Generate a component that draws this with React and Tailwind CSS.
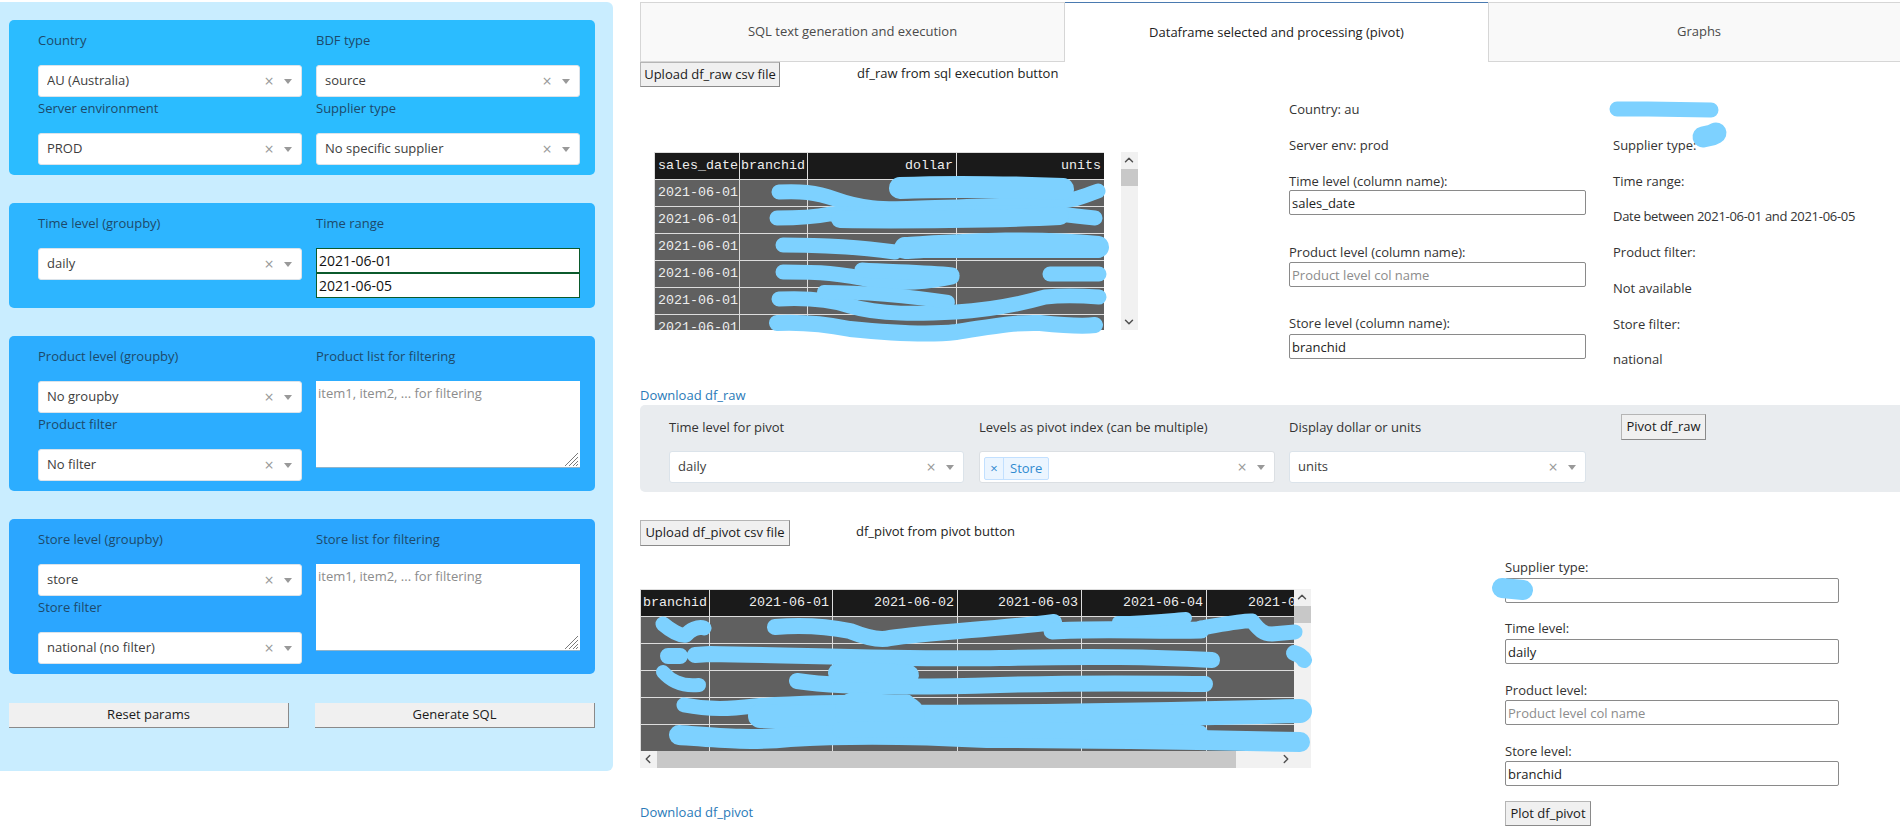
import { useState } from 'react'
import { ChevronUp, ChevronDown, ChevronLeft, ChevronRight } from 'lucide-react'

const rawRows = [0, 1, 2, 3, 4, 5]
const pivotRows = [0, 1, 2, 3, 4]
const pivotDates = ['2021-06-01', '2021-06-02', '2021-06-03', '2021-06-04', '2021-06-05']

function Select({ value, className = '', textClassName = 'text-[#3d3d3d]' }) {
  return (
    <div className={`flex h-[32px] items-center rounded-[3px] border border-[#dbe3ea] bg-white pl-[8px] ${className}`}>
      <span className={`flex-1 truncate ${textClassName}`}>{value}</span>
      <span className="w-[16px] text-center text-[16px] leading-none text-[#999]">×</span>
      <span className="ml-[7px] mr-[9px] h-0 w-0 border-x-[4px] border-t-[5px] border-x-transparent border-t-[#999]" />
    </div>
  )
}

function Field({ label, value }) {
  return (
    <div className="pt-[1px]">
      <div className="mb-[15px] h-[20px] leading-[20px] text-[#1d4a6b]">{label}</div>
      <Select value={value} />
    </div>
  )
}

function ListField({ label }) {
  return (
    <div className="pt-[1px]">
      <div className="mb-[15px] h-[20px] leading-[20px] text-[#1d4a6b]">{label}</div>
      <div className="relative h-[87px] w-[264px]">
        <textarea
          className="block h-[87px] w-[264px] resize-none border-b border-[#8fb4cc] bg-white px-[2px] py-[2px] leading-[20px] placeholder:text-[#8c8c8c]"
          placeholder="item1, item2, ... for filtering"
        />
        <svg className="absolute bottom-[1px] right-[1px]" width="15" height="15" viewBox="0 0 15 15" stroke="#7a7a7a" strokeWidth="1">
          <path d="M1 14L14 1M5 14L14 5M9 14L14 9M12 14L14 12" />
        </svg>
      </div>
    </div>
  )
}

function Box({ className, children }) {
  return <div className={`grid grid-cols-[264px_264px] gap-x-[14px] rounded-[5px] pb-[10px] pl-[29px] pt-[9px] ${className}`}>{children}</div>
}

function SideButton({ children }) {
  return (
    <button className="h-[25px] w-[280px] border-b border-r border-[#8a8a8a] bg-[#f0f0f0] text-[#1a1a1a]">
      {children}
    </button>
  )
}

function PlainButton({ className, children }) {
  return (
    <button className={`shrink-0 border border-[#b5b5b5] border-b-[#8a8a8a] border-r-[#8a8a8a] bg-[#f0f0f0] text-[#1a1a1a] ${className}`}>
      {children}
    </button>
  )
}

function TextInput({ value, placeholder, className = 'w-[297px]' }) {
  return (
    <input
      readOnly
      value={value}
      placeholder={placeholder}
      className={`block h-[25px] rounded-[2px] border border-[#8a8a8a] bg-white px-[2px] text-[#222] placeholder:text-[#8c8c8c] ${className}`}
    />
  )
}

// blue marker strokes drawn over the tables
function Scribble({ viewBox, width, height, strokes }) {
  return (
    <svg
      className="pointer-events-none absolute left-0 top-0 overflow-visible"
      width={width}
      height={height}
      viewBox={viewBox}
      fill="none"
      stroke="#7dd1ff"
      strokeLinecap="round"
      strokeLinejoin="round"
    >
      {strokes.map((s) => (
        <path key={s.d} d={s.d} strokeWidth={s.w} />
      ))}
    </svg>
  )
}

const rawStrokes = [
  { d: 'M779 192C800 191 815 192 835 199C860 208 880 210 920 208C980 206 1040 206 1075 199C1085 196 1092 193 1098 191', w: 15 },
  { d: 'M900 188C950 186 1010 187 1063 189', w: 22 },
  { d: 'M777 218C800 218 815 217 830 214C900 214 1000 212 1060 214C1075 216 1085 217 1095 218', w: 15 },
  { d: 'M840 219C900 220 1000 219 1060 216', w: 18 },
  { d: 'M783 245C820 245 860 247 895 252', w: 15 },
  { d: 'M905 248C960 245 1030 240 1098 247', w: 22 },
  { d: 'M905 251L1098 251', w: 14 },
  { d: 'M783 272C820 272 840 273 875 281C900 284 930 282 952 277', w: 15 },
  { d: 'M862 270C890 272 925 272 952 275', w: 15 },
  { d: 'M1050 274L1099 274', w: 15 },
  { d: 'M779 299C800 298 825 298 850 306C880 315 920 314 956 312C990 310 1020 304 1045 297C1065 295 1085 296 1099 297', w: 15 },
  { d: 'M824 292C860 292 910 296 948 302', w: 14 },
  { d: 'M777 323C800 322 825 324 850 329C890 333 930 335 956 332C985 328 1010 322 1040 323C1060 325 1080 327 1095 325', w: 16 },
]

const pivotStrokes = [
  { d: 'M663 624C670 630 680 636 686 635C690 630 698 626 704 628', w: 15 },
  { d: 'M775 627C800 625 825 626 850 631C865 637 880 641 890 638C930 632 1000 629 1054 622', w: 16 },
  { d: 'M1052 631C1100 628 1150 631 1201 630', w: 17 },
  { d: 'M1118 622C1150 622 1180 618 1186 618', w: 12 },
  { d: 'M1201 628C1225 624 1245 620 1252 621C1258 628 1262 634 1272 634L1295 632', w: 15 },
  { d: 'M668 656L680 656M695 655L710 654C800 655 900 660 1000 658C1100 656 1150 657 1212 660', w: 16 },
  { d: 'M1294 653C1298 654 1302 656 1304 660', w: 16 },
  { d: 'M663 672C670 680 680 687 699 685', w: 14 },
  { d: 'M797 681C830 686 900 688 1000 685C1100 682 1170 684 1205 684', w: 16 },
  { d: 'M838 673C860 672 890 673 909 675', w: 20 },
  { d: 'M684 705C710 710 730 709 755 706C790 703 830 702 907 702', w: 15 },
  { d: 'M760 716C900 718 1100 716 1300 711', w: 24 },
  { d: 'M855 712L905 716', w: 40 },
  { d: 'M679 735C720 738 750 741 790 737C870 732 950 736 987 738C1100 738 1200 740 1300 742', w: 20 },
  { d: 'M840 730C900 728 1000 729 1200 733', w: 16 },
]

export default function App() {
  const [tab] = useState('pivot')

  const tabClass = (name) =>
    name === tab
      ? 'flex items-center justify-center border-t border-t-[#4a7ab0] bg-white text-[#222]'
      : 'flex items-center justify-center border border-[#d6d6d6] bg-[#f9f9f9] text-[#4a4a4a]'

  return (
    <div className="flex h-[839px] overflow-hidden bg-white font-['Open_Sans',sans-serif] text-[13px] text-[#333]">
      {/* left params panel */}
      <div className="mt-[2px] h-[769px] w-[613px] shrink-0 rounded-r-[6px] bg-[#c9edff] pl-[9px] pt-[18px]">
        <div className="flex w-[586px] flex-col gap-[28px]">
          <Box className="bg-[#2bbcff]">
            <Field label="Country" value="AU (Australia)" />
            <Field label="BDF type" value="source" />
            <Field label="Server environment" value="PROD" />
            <Field label="Supplier type" value="No specific supplier" />
          </Box>

          <Box className="bg-[#2db5ff]">
            <Field label="Time level (groupby)" value="daily" />
            <div className="pt-[1px]">
              <div className="mb-[15px] h-[20px] leading-[20px] text-[#1d4a6b]">Time range</div>
              <input readOnly value="2021-06-01" className="block h-[25px] w-[264px] border border-[#0b5a2c] bg-white px-[2px] text-[14px] text-[#111]" />
              <input readOnly value="2021-06-05" className="block h-[25px] w-[264px] border border-[#0b5a2c] bg-white px-[2px] text-[14px] text-[#111]" />
            </div>
          </Box>

          <Box className="bg-[#2cadff]">
            <div>
              <Field label="Product level (groupby)" value="No groupby" />
              <Field label="Product filter" value="No filter" />
            </div>
            <ListField label="Product list for filtering" />
          </Box>

          <Box className="bg-[#2ba6ff]">
            <div>
              <Field label="Store level (groupby)" value="store" />
              <Field label="Store filter" value="national (no filter)" />
            </div>
            <ListField label="Store list for filtering" />
          </Box>
        </div>

        <div className="mt-[29px] flex w-[586px] justify-between">
          <SideButton>Reset params</SideButton>
          <SideButton>Generate SQL</SideButton>
        </div>
      </div>

      {/* right tabs area */}
      <div className="ml-[27px] flex-1">
        <div className="mt-[2px] grid h-[60px] grid-cols-[425px_423px_1fr]">
          <div className={tabClass('sql')}>SQL text generation and execution</div>
          <div className={tabClass('pivot')}>Dataframe selected and processing (pivot)</div>
          <div className={`${tabClass('graphs')} border-r-0 pl-[9px]`}>Graphs</div>
        </div>

        {/* df_raw section */}
        <div className="flex h-[343px]">
          <div className="w-[649px] shrink-0">
            <div className="flex items-start gap-[77px]">
              <PlainButton className="h-[25px] w-[140px]">Upload df_raw csv file</PlainButton>
              <span className="leading-[22px] text-[#222]">df_raw from sql execution button</span>
            </div>

            <div className="relative ml-[14px] mt-[65px] flex h-[178px] gap-[17px]">
              <div className="h-[178px] w-[450px] overflow-hidden">
                <table className="w-[450px] table-fixed border-collapse whitespace-nowrap font-['Liberation_Mono',monospace] text-[13.33px] text-[#eee]">
                  <colgroup>
                    <col className="w-[85px]" />
                    <col className="w-[68px]" />
                    <col className="w-[149px]" />
                    <col className="w-[148px]" />
                  </colgroup>
                  <thead>
                    <tr className="h-[27px] bg-[#1a1a1a]">
                      <th className="border border-[#ddd] pl-[3px] text-left font-normal">sales_date</th>
                      <th className="border border-[#ddd] px-[1px] text-left font-normal">branchid</th>
                      <th className="border border-[#ddd] px-[3px] text-right font-normal">dollar</th>
                      <th className="border border-[#ddd] px-[3px] text-right font-normal">units</th>
                    </tr>
                  </thead>
                  <tbody>
                    {rawRows.map((r) => (
                      <tr key={r} className="h-[27px] bg-[#606060]">
                        <td className="border border-[#ddd] pl-[3px]">2021-06-01</td>
                        <td className="border border-[#ddd]" />
                        <td className="border border-[#ddd]" />
                        <td className="border border-[#ddd]" />
                      </tr>
                    ))}
                  </tbody>
                </table>
              </div>
              <div className="relative h-[178px] w-[17px] bg-[#f1f1f1]">
                <ChevronUp size={14} strokeWidth={2.5} className="absolute left-[1px] top-[1px] text-[#505050]" />
                <div className="absolute left-0 top-[17px] h-[17px] w-[17px] bg-[#c8c8c8]" />
                <ChevronDown size={14} strokeWidth={2.5} className="absolute bottom-[1px] left-[1px] text-[#505050]" />
              </div>
              <Scribble viewBox="654 152 450 178" width={450} height={178} strokes={rawStrokes} />
            </div>

            <a className="mt-[55px] block h-[20px] leading-[20px] text-[#2a7ab8]">Download df_raw</a>
          </div>

          <div className="relative flex gap-[27px] pt-[37px] text-[#333]">
            <div className="w-[297px]">
              <div className="h-[36px] leading-[20px]">Country: au</div>
              <div className="h-[36px] leading-[20px]">Server env: prod</div>
              <div className="h-[19px] leading-[20px]">Time level (column name):</div>
              <TextInput value="sales_date" />
              <div className="mt-[27px] h-[20px] leading-[20px]">Product level (column name):</div>
              <TextInput placeholder="Product level col name" />
              <div className="mt-[26px] h-[21px] leading-[20px]">Store level (column name):</div>
              <TextInput value="branchid" />
            </div>
            <div className="relative">
              <div className="h-[35.75px] leading-[20px]" />
              <div className="h-[35.75px] leading-[20px]">Supplier type:</div>
              <div className="h-[35.75px] leading-[20px]">Time range:</div>
              <div className="h-[35.75px] leading-[20px] tracking-[-0.3px]">Date between 2021-06-01 and 2021-06-05</div>
              <div className="h-[35.75px] leading-[20px]">Product filter:</div>
              <div className="h-[35.75px] leading-[20px]">Not available</div>
              <div className="h-[35.75px] leading-[20px]">Store filter:</div>
              <div className="h-[35.75px] leading-[20px]">national</div>
              <svg className="pointer-events-none absolute left-[-5px] top-0 overflow-visible" width="125" height="60" viewBox="0 0 125 60" fill="none" stroke="#7dd1ff" strokeLinecap="round">
                <path d="M9 10L40 10L103 11" strokeWidth="15" />
                <path d="M95 38L104 36L108 34" strokeWidth="21" />
              </svg>
            </div>
          </div>
        </div>

        {/* pivot params band */}
        <div className="flex h-[87px] rounded-l-[5px] bg-[#e9ecef] pl-[29px] pt-[12px]">
          <div className="w-[295px]">
            <div className="mb-[14px] h-[20px] leading-[20px]">Time level for pivot</div>
            <Select value="daily" />
          </div>
          <div className="ml-[15px] w-[296px]">
            <div className="mb-[14px] h-[20px] leading-[20px]">Levels as pivot index (can be multiple)</div>
            <div className="flex h-[32px] items-center rounded-[3px] border border-[#dbdfe3] bg-white pl-[4px]">
              <div className="mt-[2px] flex h-[23px] flex-1 items-center">
                <div className="flex h-[23px] items-center rounded-[2px] border border-[#c2e0ff] bg-[#ebf5ff] text-[#2f8ad0]">
                  <span className="w-[19px] border-r border-[#c2e0ff] text-center leading-[21px]">×</span>
                  <span className="px-[6px] leading-[21px]">Store</span>
                </div>
              </div>
              <span className="w-[16px] text-center text-[16px] leading-none text-[#999]">×</span>
              <span className="ml-[7px] mr-[9px] h-0 w-0 border-x-[4px] border-t-[5px] border-x-transparent border-t-[#999]" />
            </div>
          </div>
          <div className="ml-[14px] w-[297px]">
            <div className="mb-[14px] h-[20px] leading-[20px]">Display dollar or units</div>
            <Select value="units" />
          </div>
          <PlainButton className="ml-[35px] mt-[-3px] h-[26px] w-[85px]">Pivot df_raw</PlainButton>
        </div>

        {/* df_pivot section */}
        <div className="flex">
          <div className="w-[865px] shrink-0">
            <div className="mt-[28px] flex items-start gap-[66px]">
              <PlainButton className="h-[26px] w-[150px]">Upload df_pivot csv file</PlainButton>
              <span className="leading-[22px] text-[#222]">df_pivot from pivot button</span>
            </div>

            <div className="relative mt-[43px] h-[179px] w-[671px]">
              <div className="flex h-[162px]">
                <div className="h-[162px] w-[654px] overflow-hidden">
                  <table className="w-[691px] table-fixed border-collapse whitespace-nowrap font-['Liberation_Mono',monospace] text-[13.33px] text-[#eee]">
                    <colgroup>
                      <col className="w-[69px]" />
                      <col className="w-[123px]" />
                      <col className="w-[125px]" />
                      <col className="w-[124px]" />
                      <col className="w-[125px]" />
                      <col className="w-[125px]" />
                    </colgroup>
                    <thead>
                      <tr className="h-[27px] bg-[#1a1a1a]">
                        <th className="border border-[#ddd] px-[2px] text-left font-normal">branchid</th>
                        {pivotDates.map((d) => (
                          <th key={d} className="border border-[#ddd] px-[3px] text-right font-normal">{d}</th>
                        ))}
                      </tr>
                    </thead>
                    <tbody>
                      {pivotRows.map((r) => (
                        <tr key={r} className="h-[27px] bg-[#606060]">
                          <td className="border border-[#ddd]" />
                          {pivotDates.map((d) => (
                            <td key={d} className="border border-[#ddd]" />
                          ))}
                        </tr>
                      ))}
                    </tbody>
                  </table>
                </div>
                <div className="relative h-[162px] w-[17px] bg-[#f1f1f1]">
                  <ChevronUp size={14} strokeWidth={2.5} className="absolute left-[1px] top-[1px] text-[#505050]" />
                  <div className="absolute left-0 top-[17px] h-[17px] w-[17px] bg-[#c8c8c8]" />
                </div>
              </div>
              <div className="relative h-[17px] w-[671px] bg-[#f1f1f1]">
                <ChevronLeft size={14} strokeWidth={2.5} className="absolute left-[1px] top-[1px] text-[#505050]" />
                <div className="absolute left-[17px] top-0 h-[17px] w-[579px] bg-[#c8c8c8]" />
                <ChevronRight size={14} strokeWidth={2.5} className="absolute left-[639px] top-[1px] text-[#505050]" />
              </div>
              <Scribble viewBox="640 589 654 162" width={654} height={162} strokes={pivotStrokes} />
            </div>

            <a className="mt-[34px] block h-[20px] leading-[20px] text-[#2a7ab8]">Download df_pivot</a>
          </div>

          <div className="relative pt-[65px]">
            <div className="h-[21px] leading-[20px]">Supplier type:</div>
            <TextInput className="w-[334px]" />
            <div className="mt-[15px] h-[21px] leading-[20px]">Time level:</div>
            <TextInput className="w-[334px]" value="daily" />
            <div className="mt-[16px] h-[20px] leading-[20px]">Product level:</div>
            <TextInput className="w-[334px]" placeholder="Product level col name" />
            <div className="mt-[16px] h-[20px] leading-[20px]">Store level:</div>
            <TextInput className="w-[334px]" value="branchid" />
            <PlainButton className="mt-[15px] h-[25px] w-[86px]">Plot df_pivot</PlainButton>
            <svg className="pointer-events-none absolute left-[-12px] top-[85px] overflow-visible" width="42" height="26" viewBox="0 0 42 26" fill="none" stroke="#7dd1ff" strokeLinecap="round">
              <path d="M9 11L30 13" strokeWidth="20" />
            </svg>
          </div>
        </div>
      </div>
    </div>
  )
}
